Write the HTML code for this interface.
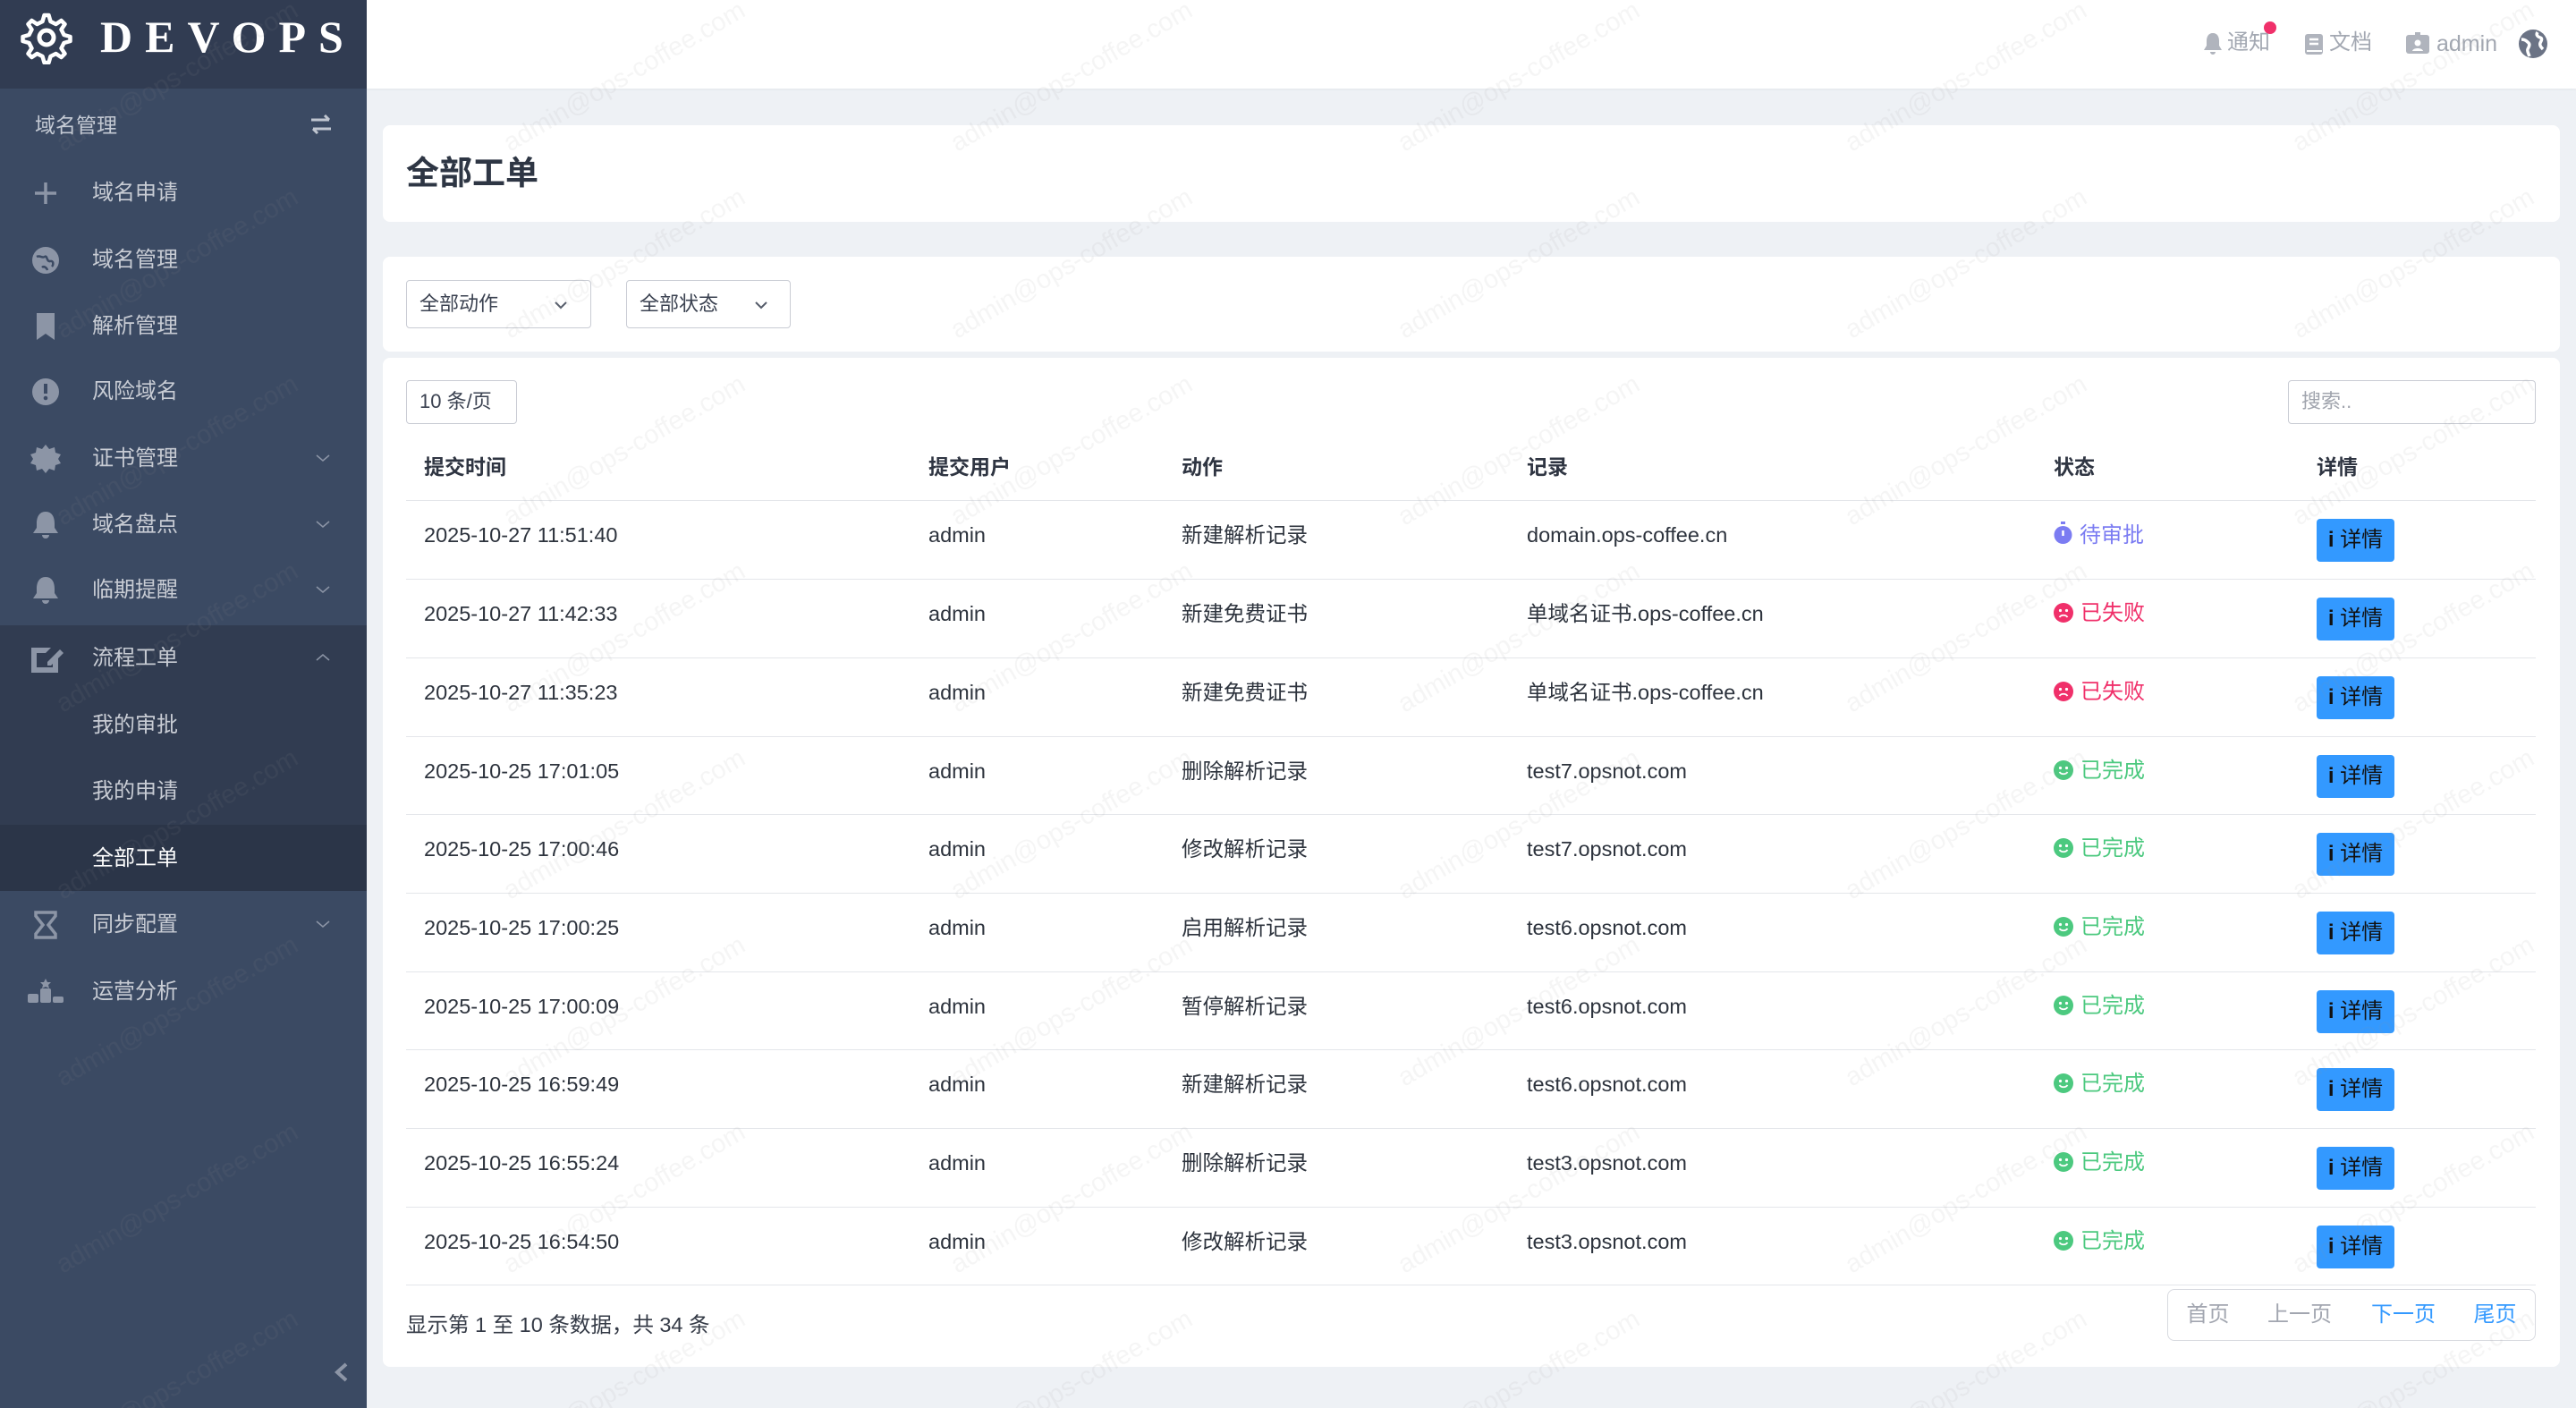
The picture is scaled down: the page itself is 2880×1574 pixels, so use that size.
<!DOCTYPE html>
<html><head><meta charset="utf-8">
<style>
*{margin:0;padding:0;box-sizing:border-box}
body{width:2880px;height:1574px;overflow:hidden;background:#eef1f5;font-family:"Liberation Sans","Noto Sans CJK SC",sans-serif;position:relative;color:#343a46}
.side{position:absolute;left:0;top:0;width:410px;height:1574px;background:#3b4a63}
.logo{position:absolute;left:0;top:0;width:410px;height:99px;background:#313c52}
.logo .t{position:absolute;left:112px;top:12px;font-family:"Liberation Serif",serif;font-weight:bold;font-size:50px;letter-spacing:14px;color:#fff}
.sec{position:absolute;left:39px;top:125px;font-size:23px;line-height:30px;color:#c4cad4}
.mi{position:absolute;left:0;width:410px;height:74px;font-size:24px;color:#c8ccd4}
.mi .tx{position:absolute;left:103px;top:23px;line-height:30px}
.mi svg.ic{position:absolute;left:33px;top:20px}
.mi .ch{position:absolute;left:352px;top:28px;width:18px;height:18px}
.top{position:absolute;left:410px;top:0;width:2470px;height:99px;background:#fff;box-shadow:0 1px 3px rgba(0,0,0,.05)}
.card{position:absolute;background:#fff;border-radius:8px}
.sel{position:absolute;border:1px solid #c9ccd4;border-radius:4px;background:#fff;font-size:22px;line-height:28px;color:#3a4150}
.hd{position:absolute;font-size:23px;line-height:30px;font-weight:bold;color:#2f3542;top:507px}
.row{position:absolute;left:454px;width:2381px;height:88px;border-top:1px solid #e4e6ea;font-size:23.5px;color:#2d333d}
.row span{position:absolute;top:23px;line-height:30px}
.btn{position:absolute;left:2136px;top:20px;width:87px;height:48px;background:#3399ff;border-radius:4px;color:#111;font-size:24px;text-align:center;line-height:48px}
.st{position:absolute;left:1842px;top:23px;font-size:24px;line-height:30px}
.st svg{vertical-align:-3px;margin-right:8px}
.pg{position:absolute;top:1441px;height:58px;border:1px solid #d8dae0;font-size:24px;text-align:center;line-height:56px;color:#a2a6b0;background:#fff}
</style></head><body>
<div class="side">
 <div class="logo">
  <svg style="position:absolute;left:22px;top:12px" width="60" height="60" viewBox="0 0 60 60"><path d="M30 5l5 0 2 7 6 3 6-4 4 4-4 6 3 6 7 2 0 5-7 2-3 6 4 6-4 4-6-4-6 3-2 7-5 0-2-7-6-3-6 4-4-4 4-6-3-6-7-2 0-5 7-2 3-6-4-6 4-4 6 4 6-3z" fill="none" stroke="#fff" stroke-width="4.5" stroke-linejoin="round" transform="translate(-2.5 0)"/><circle cx="30" cy="30" r="8" fill="none" stroke="#fff" stroke-width="5"/></svg>
  <div class="t">DEVOPS</div>
 </div>
 <div class="sec">域名管理</div>
 <svg style="position:absolute;left:346px;top:128px" width="26" height="22" viewBox="0 0 26 22"><path d="M2 6h20M17 1l5 5M24 16H4M9 21l-5-5" stroke="#c0c6d0" stroke-width="3" fill="none"/></svg>

 <div class="mi" style="top:178px"><svg class="ic" width="36" height="36" viewBox="0 0 36 36"><path d="M18 6v24M6 18h24" stroke="#8c95a6" stroke-width="3.5"/></svg><span class="tx">域名申请</span></div>
 <div class="mi" style="top:253px"><svg class="ic" width="36" height="36" viewBox="0 0 36 36"><circle cx="18" cy="18" r="15" fill="#8c95a6"/><path d="M8 14c4-2 6 2 9 0s2 6 6 5 4 4 2 6M14 26c2-2 5 0 6 3" stroke="#3b4a63" stroke-width="2.5" fill="none"/></svg><span class="tx">域名管理</span></div>
 <div class="mi" style="top:327px"><svg class="ic" width="36" height="36" viewBox="0 0 36 36"><path d="M8 3h20v30l-10-7-10 7z" fill="#8c95a6"/></svg><span class="tx">解析管理</span></div>
 <div class="mi" style="top:400px"><svg class="ic" width="36" height="36" viewBox="0 0 36 36"><circle cx="18" cy="18" r="15" fill="#8c95a6"/><path d="M18 9v11" stroke="#3b4a63" stroke-width="4"/><circle cx="18" cy="25" r="2.3" fill="#3b4a63"/></svg><span class="tx">风险域名</span></div>
 <div class="mi" style="top:475px"><svg class="ic" width="36" height="36" viewBox="0 0 36 36"><path d="M18 2l4 5 6-2 1 6 6 2-3 5 3 5-6 2-1 6-6-2-4 5-4-5-6 2-1-6-6-2 3-5-3-5 6-2 1-6 6 2z" fill="#8c95a6"/></svg><span class="tx">证书管理</span><svg class="ch" viewBox="0 0 18 18"><path d="M2 6l7 6 7-6" stroke="#8c95a6" stroke-width="1.5" fill="none"/></svg></div>
 <div class="mi" style="top:549px"><svg class="ic" width="36" height="36" viewBox="0 0 36 36"><path d="M18 3c-7 0-10 6-10 13v5l-4 6h28l-4-6v-5c0-7-3-13-10-13zM14 29a4 4 0 0 0 8 0z" fill="#8c95a6"/></svg><span class="tx">域名盘点</span><svg class="ch" viewBox="0 0 18 18"><path d="M2 6l7 6 7-6" stroke="#8c95a6" stroke-width="1.5" fill="none"/></svg></div>
 <div class="mi" style="top:622px"><svg class="ic" width="36" height="36" viewBox="0 0 36 36"><path d="M18 3c-7 0-10 6-10 13v5l-4 6h28l-4-6v-5c0-7-3-13-10-13zM14 29a4 4 0 0 0 8 0z" fill="#8c95a6"/></svg><span class="tx">临期提醒</span><svg class="ch" viewBox="0 0 18 18"><path d="M2 6l7 6 7-6" stroke="#8c95a6" stroke-width="1.5" fill="none"/></svg></div>
 <div style="position:absolute;left:0;top:699px;width:410px;height:297px;background:#313c51"></div>
 <div style="position:absolute;left:0;top:922px;width:410px;height:74px;background:#2b3548"></div>
 <div class="mi" style="top:698px"><svg class="ic" width="40" height="36" viewBox="0 0 40 36"><path d="M2 6h22l-6 6H8v16h18v-6l6-6v18H2z" fill="#8c95a6"/><path d="M20 22l14-14 4 4-14 14h-4z" fill="#8c95a6"/></svg><span class="tx">流程工单</span><svg class="ch" viewBox="0 0 18 18"><path d="M2 12l7-6 7 6" stroke="#8c95a6" stroke-width="1.5" fill="none"/></svg></div>
 <div class="mi" style="top:773px"><span class="tx">我的审批</span></div>
 <div class="mi" style="top:847px"><span class="tx">我的申请</span></div>
 <div class="mi" style="top:922px"><span class="tx" style="color:#fff">全部工单</span></div>
 <div class="mi" style="top:996px"><svg class="ic" width="36" height="36" viewBox="0 0 36 36"><path d="M7 4h22v4l-8 10 8 10v4H7v-4l8-10-8-10z" fill="none" stroke="#8c95a6" stroke-width="3.5"/></svg><span class="tx">同步配置</span><svg class="ch" viewBox="0 0 18 18"><path d="M2 6l7 6 7-6" stroke="#8c95a6" stroke-width="1.5" fill="none"/></svg></div>
 <div class="mi" style="top:1071px"><svg class="ic" style="left:30px" width="42" height="36" viewBox="0 0 42 36"><rect x="1" y="20" width="12" height="10" rx="2" fill="#8c95a6"/><rect x="15" y="14" width="12" height="16" rx="2" fill="#8c95a6"/><rect x="29" y="23" width="12" height="7" rx="2" fill="#8c95a6"/><path d="M21 3l2 4 4 0-3 3 1 4-4-2-4 2 1-4-3-3 4 0z" fill="#8c95a6"/></svg><span class="tx">运营分析</span></div>
 <svg style="position:absolute;left:372px;top:1522px" width="20" height="24" viewBox="0 0 20 24"><path d="M15 3l-10 9 10 9" stroke="#8c95a6" stroke-width="4" fill="none"/></svg>
</div>

<div class="top">
 <svg style="position:absolute;left:2053px;top:36px" width="22" height="26" viewBox="0 0 22 26"><path d="M11 1c-5 0-7 4-7 9v5l-3 5h20l-3-5v-5c0-5-2-9-7-9zM8 22a3 3 0 0 0 6 0z" fill="#b0b4bd"/></svg>
 <span style="position:absolute;left:2080px;top:33px;font-size:24px;line-height:30px;color:#a3a8b2">通知</span>
 <div style="position:absolute;left:2121px;top:24px;width:14px;height:14px;border-radius:50%;background:#f0306a"></div>
 <svg style="position:absolute;left:2166px;top:37px" width="22" height="25" viewBox="0 0 22 25"><rect x="1" y="1" width="20" height="23" rx="3" fill="#b0b4bd"/><path d="M6 7h10M6 12h10" stroke="#fff" stroke-width="2.5"/><path d="M3 20h17" stroke="#fff" stroke-width="2"/></svg>
 <span style="position:absolute;left:2194px;top:33px;font-size:24px;line-height:30px;color:#a3a8b2">文档</span>
 <svg style="position:absolute;left:2279px;top:35px" width="28" height="26" viewBox="0 0 28 26"><rect x="1" y="4" width="26" height="21" rx="3" fill="#b0b4bd"/><rect x="11" y="1" width="6" height="6" fill="#b0b4bd"/><circle cx="14" cy="13" r="3.5" fill="#fff"/><path d="M8 22c1-4 11-4 12 0z" fill="#fff"/></svg>
 <span style="position:absolute;left:2314px;top:34px;font-size:25px;line-height:30px;color:#a3a8b2">admin</span>
 <svg style="position:absolute;left:2406px;top:33px" width="32" height="32" viewBox="0 0 32 32"><circle cx="16" cy="16" r="16" fill="#6b7385"/><path d="M3 11c4 0 6 2 8 4s0 5-1 7 1 5 2 8M21 3c-2 3 0 5 3 6s1 4 0 6 1 5 3 7" stroke="#fff" stroke-width="3.5" fill="none"/></svg>
</div>

<div class="card" style="left:428px;top:140px;width:2434px;height:108px"><div style="position:absolute;left:26px;top:32px;font-size:37px;line-height:44px;font-weight:bold;color:#2e3644">全部工单</div></div>
<div class="card" style="left:428px;top:287px;width:2434px;height:106px">
 <div class="sel" style="left:26px;top:26px;width:207px;height:54px"><span style="position:absolute;left:14px;top:12px">全部动作</span><svg style="position:absolute;left:164px;top:20px" width="16" height="14" viewBox="0 0 16 14"><path d="M2 4l6 6 6-6" stroke="#555c6a" stroke-width="2" fill="none"/></svg></div>
 <div class="sel" style="left:272px;top:26px;width:184px;height:54px"><span style="position:absolute;left:14px;top:12px">全部状态</span><svg style="position:absolute;left:142px;top:20px" width="16" height="14" viewBox="0 0 16 14"><path d="M2 4l6 6 6-6" stroke="#555c6a" stroke-width="2" fill="none"/></svg></div>
</div>
<div class="card" style="left:428px;top:400px;width:2434px;height:1128px"></div>
<div class="sel" style="left:454px;top:425px;width:124px;height:49px;font-size:22px"><span style="position:absolute;left:14px;top:9px">10 条/页</span></div>
<div class="sel" style="left:2558px;top:425px;width:277px;height:49px;font-size:22px;color:#a0a4ad"><span style="position:absolute;left:14px;top:9px">搜索..</span></div>
<div class="hd" style="left:474px">提交时间</div>
<div class="hd" style="left:1038px">提交用户</div>
<div class="hd" style="left:1321px">动作</div>
<div class="hd" style="left:1707px">记录</div>
<div class="hd" style="left:2296px">状态</div>
<div class="hd" style="left:2590px">详情</div>

<svg width="0" height="0" style="position:absolute"><defs>
<symbol id="sad" viewBox="0 0 22 22"><circle cx="11" cy="11" r="11" fill="#f0306a"/><circle cx="7.5" cy="8.5" r="1.6" fill="#fff"/><circle cx="14.5" cy="8.5" r="1.6" fill="#fff"/><path d="M6.5 16c2-3 7-3 9 0" stroke="#fff" stroke-width="1.8" fill="none"/></symbol>
<symbol id="ok" viewBox="0 0 22 22"><circle cx="11" cy="11" r="11" fill="#4cc97f"/><circle cx="7.5" cy="8.5" r="1.6" fill="#fff"/><circle cx="14.5" cy="8.5" r="1.6" fill="#fff"/><path d="M6.5 13c2 3 7 3 9 0" stroke="#fff" stroke-width="1.8" fill="none"/></symbol>
</defs></svg>

<div class="row" style="top:559px"><span style="left:20px">2025-10-27 11:51:40</span><span style="left:584px">admin</span><span style="left:867px">新建解析记录</span><span style="left:1253px">domain.ops-coffee.cn</span><div class="st" style="color:#7b7cf2"><svg width="21" height="26" viewBox="0 0 21 26"><rect x="8" y="0" width="5" height="3" fill="#7b7cf2"/><circle cx="10.5" cy="15" r="10" fill="#7b7cf2"/><path d="M10.5 10v6" stroke="#fff" stroke-width="2.5"/></svg>待审批</div><div class="btn"><b>i</b> 详情</div></div>
<div class="row" style="top:647px"><span style="left:20px">2025-10-27 11:42:33</span><span style="left:584px">admin</span><span style="left:867px">新建免费证书</span><span style="left:1253px">单域名证书.ops-coffee.cn</span><div class="st" style="color:#f0306a"><svg width="22" height="22"><use href="#sad"/></svg>已失败</div><div class="btn"><b>i</b> 详情</div></div>
<div class="row" style="top:735px"><span style="left:20px">2025-10-27 11:35:23</span><span style="left:584px">admin</span><span style="left:867px">新建免费证书</span><span style="left:1253px">单域名证书.ops-coffee.cn</span><div class="st" style="color:#f0306a"><svg width="22" height="22"><use href="#sad"/></svg>已失败</div><div class="btn"><b>i</b> 详情</div></div>
<div class="row" style="top:823px"><span style="left:20px">2025-10-25 17:01:05</span><span style="left:584px">admin</span><span style="left:867px">删除解析记录</span><span style="left:1253px">test7.opsnot.com</span><div class="st" style="color:#4cc97f"><svg width="22" height="22"><use href="#ok"/></svg>已完成</div><div class="btn"><b>i</b> 详情</div></div>
<div class="row" style="top:910px"><span style="left:20px">2025-10-25 17:00:46</span><span style="left:584px">admin</span><span style="left:867px">修改解析记录</span><span style="left:1253px">test7.opsnot.com</span><div class="st" style="color:#4cc97f"><svg width="22" height="22"><use href="#ok"/></svg>已完成</div><div class="btn"><b>i</b> 详情</div></div>
<div class="row" style="top:998px"><span style="left:20px">2025-10-25 17:00:25</span><span style="left:584px">admin</span><span style="left:867px">启用解析记录</span><span style="left:1253px">test6.opsnot.com</span><div class="st" style="color:#4cc97f"><svg width="22" height="22"><use href="#ok"/></svg>已完成</div><div class="btn"><b>i</b> 详情</div></div>
<div class="row" style="top:1086px"><span style="left:20px">2025-10-25 17:00:09</span><span style="left:584px">admin</span><span style="left:867px">暂停解析记录</span><span style="left:1253px">test6.opsnot.com</span><div class="st" style="color:#4cc97f"><svg width="22" height="22"><use href="#ok"/></svg>已完成</div><div class="btn"><b>i</b> 详情</div></div>
<div class="row" style="top:1173px"><span style="left:20px">2025-10-25 16:59:49</span><span style="left:584px">admin</span><span style="left:867px">新建解析记录</span><span style="left:1253px">test6.opsnot.com</span><div class="st" style="color:#4cc97f"><svg width="22" height="22"><use href="#ok"/></svg>已完成</div><div class="btn"><b>i</b> 详情</div></div>
<div class="row" style="top:1261px"><span style="left:20px">2025-10-25 16:55:24</span><span style="left:584px">admin</span><span style="left:867px">删除解析记录</span><span style="left:1253px">test3.opsnot.com</span><div class="st" style="color:#4cc97f"><svg width="22" height="22"><use href="#ok"/></svg>已完成</div><div class="btn"><b>i</b> 详情</div></div>
<div class="row" style="top:1349px;border-bottom:1px solid #e4e6ea"><span style="left:20px">2025-10-25 16:54:50</span><span style="left:584px">admin</span><span style="left:867px">修改解析记录</span><span style="left:1253px">test3.opsnot.com</span><div class="st" style="color:#4cc97f"><svg width="22" height="22"><use href="#ok"/></svg>已完成</div><div class="btn"><b>i</b> 详情</div></div>

<div style="position:absolute;left:454px;top:1466px;font-size:23.5px;line-height:30px;color:#343a46">显示第 1 至 10 条数据，共 34 条</div>
<div class="pg" style="left:2423px;width:91px;border-radius:8px 0 0 8px">首页</div>
<div class="pg" style="left:2513px;width:117px;border-left:none">上一页</div>
<div class="pg" style="left:2629px;width:117px;border-left:none;color:#3399ff">下一页</div>
<div class="pg" style="left:2745px;width:90px;border-left:none;border-radius:0 8px 8px 0;color:#3399ff">尾页</div>

<svg style="position:absolute;left:0;top:0;pointer-events:none" width="2880" height="1574">
 <defs><pattern id="wm" x="40" y="0" width="500" height="209" patternUnits="userSpaceOnUse">
  <text x="0" y="0" transform="translate(30 170) rotate(-30)" font-family="Liberation Sans, sans-serif" font-size="29" fill="rgba(140,140,140,0.09)">admin@ops-coffee.com</text>
 </pattern></defs>
 <rect width="2880" height="1574" fill="url(#wm)"/>
</svg>
</body></html>
